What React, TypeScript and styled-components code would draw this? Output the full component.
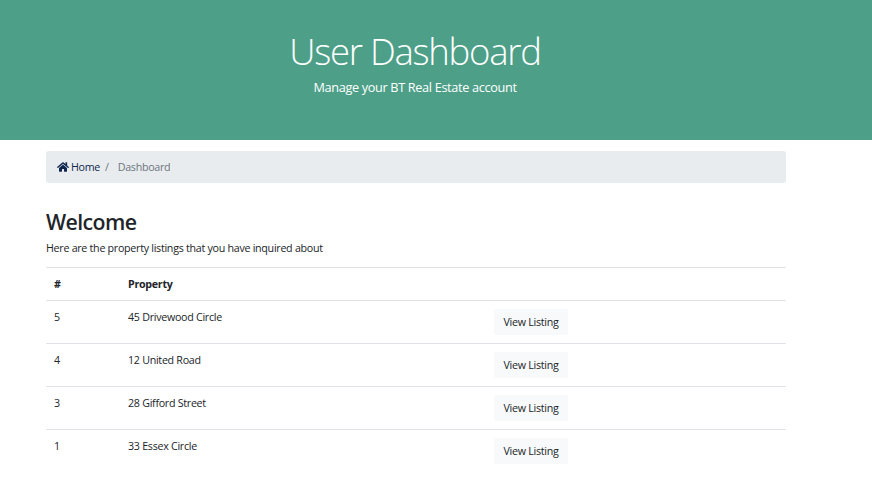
import React from "react";
import styled, { createGlobalStyle } from "styled-components";
import { FaHome } from "react-icons/fa";

const GlobalStyle = createGlobalStyle`
  *, *::before, *::after { box-sizing: border-box; }
  body {
    margin: 0;
    background: #fff;
    color: #212529;
    font-family: "Open Sans", "Noto Sans", sans-serif;
    font-size: 10.7px;
    line-height: 16px;
    letter-spacing: -0.28px;
    overflow: hidden;
  }
`;

const Banner = styled.header`
  height: 140px;
  padding-top: 29px;
  background: #4d9f88;
  color: #fff;
  text-align: center;
`;

const BannerInner = styled.div`
  width: 740px;
  margin-left: 45px;
`;

const BannerTitle = styled.h1`
  margin: 0;
  font-size: 36.5px;
  font-weight: 300;
  line-height: 45px;
  letter-spacing: -1.25px;
`;

const BannerText = styled.p`
  margin: 3px 0 0;
  font-size: 12.7px;
  line-height: 20px;
  letter-spacing: -0.33px;
`;

const Container = styled.main`
  width: 740px;
  margin-left: 46px;
`;

const Breadcrumb = styled.nav`
  display: flex;
  align-items: center;
  height: 32px;
  margin-top: 11px;
  padding: 0 11px;
  border-radius: 3px;
  background: #e9ecef;
  color: #6c757d;
`;

const HomeLink = styled.a`
  display: flex;
  align-items: center;
  gap: 2px;
  color: #10284e;
`;

const Separator = styled.span`
  margin: 0 9px 0 5px;
`;

const Title = styled.h2`
  margin: 26px 0 0;
  font-size: 21.3px;
  font-weight: 600;
  line-height: 26px;
  letter-spacing: -0.6px;
`;

const Lead = styled.p`
  margin: 5px 0 11px;
`;

const Table = styled.div`
  display: flex;
  flex-direction: column;
`;

const Row = styled.div<{ $head?: boolean }>`
  display: grid;
  grid-template-columns: 74px 366px 1fr;
  align-items: start;
  height: ${(p) => (p.$head ? 33 : 43)}px;
  padding: 8px;
  border-top: 1px solid #dee2e6;
  font-weight: ${(p) => (p.$head ? 700 : 400)};
`;

const ViewButton = styled.button`
  width: 74px;
  height: 26px;
  padding: 0;
  border: 0;
  border-radius: 2px;
  background: #f8f9fa;
  color: #212529;
  font: inherit;
  letter-spacing: inherit;
`;

const listings = [
  { id: 5, name: "45 Drivewood Circle" },
  { id: 4, name: "12 United Road" },
  { id: 3, name: "28 Gifford Street" },
  { id: 1, name: "33 Essex Circle" },
];

export default function App() {
  return (
    <>
      <GlobalStyle />
      <Banner>
        <BannerInner>
          <BannerTitle>User Dashboard</BannerTitle>
          <BannerText>Manage your BT Real Estate account</BannerText>
        </BannerInner>
      </Banner>
      <Container>
        <Breadcrumb>
          <HomeLink><FaHome size={12} />Home</HomeLink>
          <Separator>/</Separator>
          <span>Dashboard</span>
        </Breadcrumb>
        <Title>Welcome</Title>
        <Lead>Here are the property listings that you have inquired about</Lead>
        <Table>
          <Row $head><span>#</span><span>Property</span></Row>
          {listings.map((l) => (
            <Row key={l.id}>
              <span>{l.id}</span>
              <span>{l.name}</span>
              <ViewButton>View Listing</ViewButton>
            </Row>
          ))}
        </Table>
      </Container>
    </>
  );
}
